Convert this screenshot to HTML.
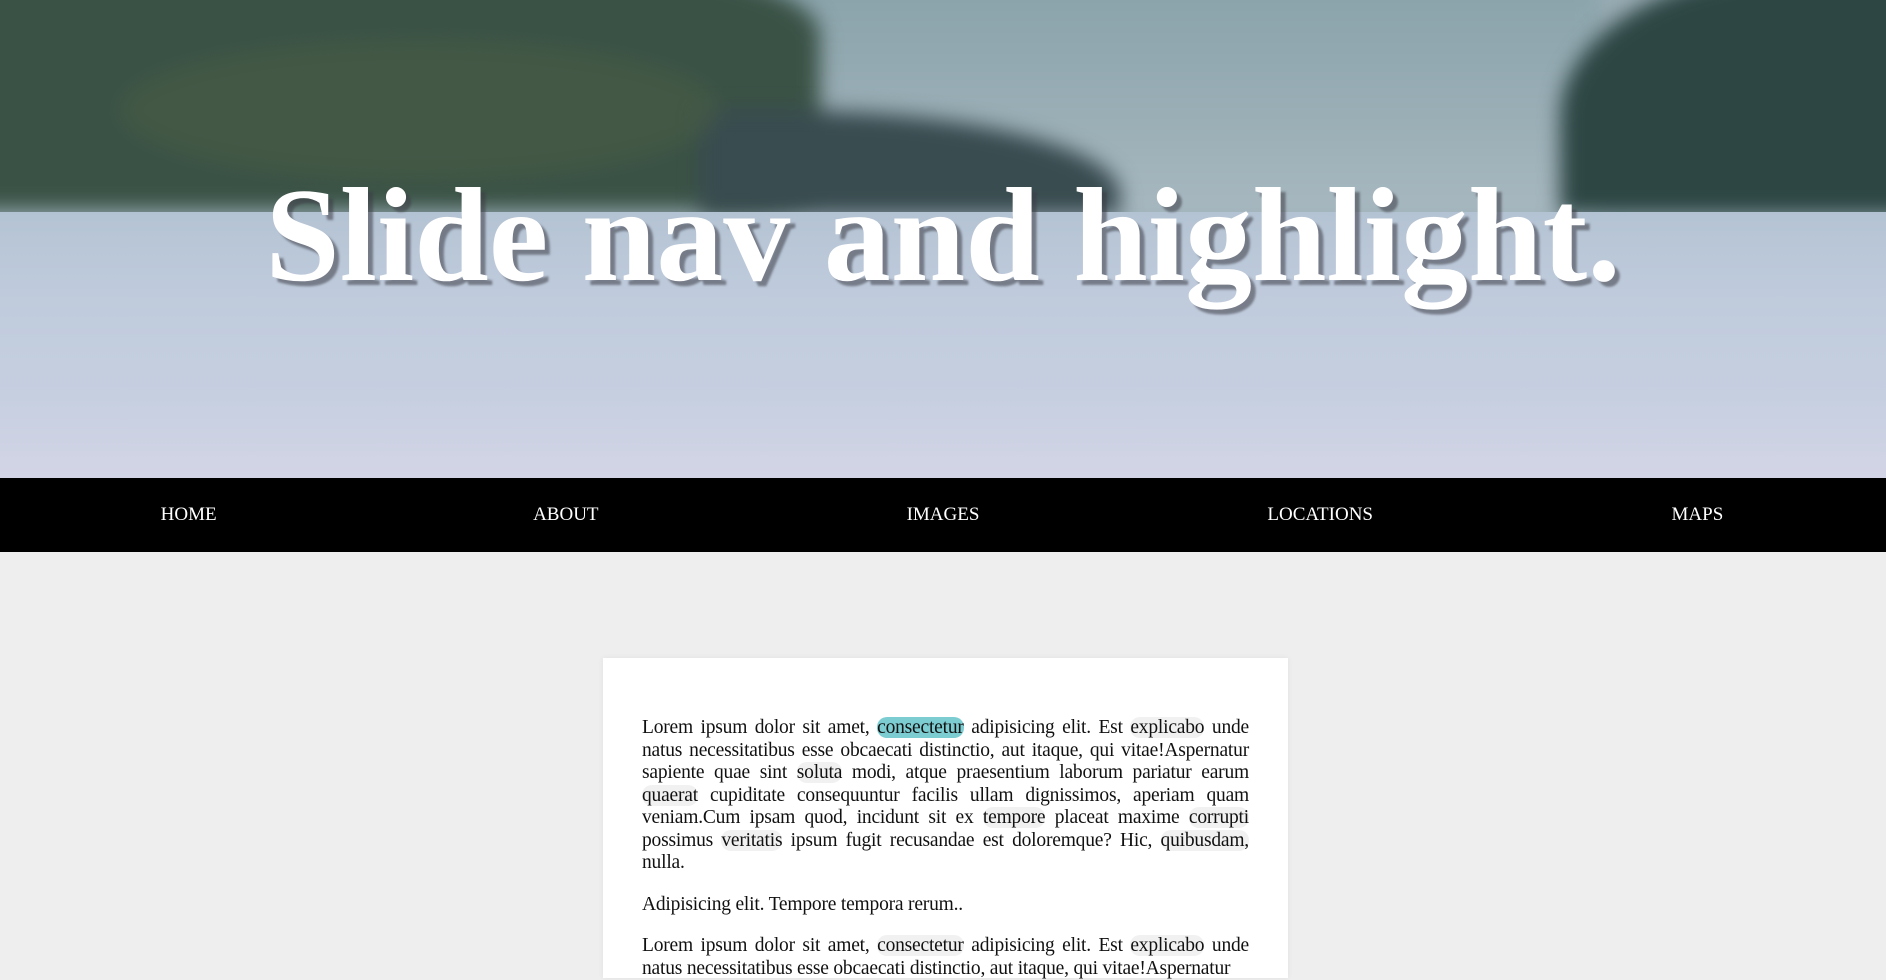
<!DOCTYPE html>
<html><head><meta charset="utf-8"><style>
*{margin:0;padding:0;box-sizing:border-box}
body{width:1886px;height:965px;overflow:hidden;background:#eeeeee;font-family:"Liberation Serif",serif}
.hero{position:relative;height:478px;overflow:hidden;background:#9aadb5}
.b{position:absolute;filter:blur(10px)}
.water{position:absolute;left:0;right:0;top:212px;bottom:0;background:linear-gradient(180deg,#b4c3d3 0%,#bfcbdc 30%,#c6cfe0 70%,#d3d5e6 100%)}
.hero h1{position:absolute;left:0;right:0;top:158px;text-align:center;font-size:134px;font-weight:bold;color:#fff;text-shadow:5px 5px 2px rgba(60,60,70,.55);white-space:nowrap}
nav{height:74px;background:#000;display:flex}
nav a{flex:1;text-align:center;color:#fff;font-size:19px;line-height:74px;text-decoration:none}
.card{position:absolute;left:603px;top:658px;width:685px;height:320px;background:#fff;box-shadow:0 0 6px rgba(0,0,0,.06);padding:59px 39px 0 39px}
.card p{font-size:19.5px;line-height:22.5px;text-align:justify;margin-bottom:19px;color:#111;letter-spacing:-0.2px}
.h{background:#f1f1f1;border-radius:10px}
.t{background:#7ccdd2;border-radius:10px}
</style></head><body>
<div class="hero">
<div class="b" style="left:700px;top:-40px;width:900px;height:260px;background:linear-gradient(180deg,#86a0a8,#a8b8c0);"></div>
<div class="b" style="left:-40px;top:-40px;width:860px;height:250px;background:#3a5246;border-radius:0 30% 10% 0"></div>
<div class="b" style="left:700px;top:110px;width:420px;height:105px;background:#394c50;border-radius:0 80% 0 0"></div>
<div class="b" style="left:120px;top:40px;width:600px;height:140px;background:#4c5f45;opacity:.5;border-radius:50%"></div>
<div class="b" style="left:1560px;top:-30px;width:400px;height:245px;background:#2d4644;border-radius:60% 0 0 0"></div>
<div class="water"></div>
<h1>Slide nav and highlight.</h1>
</div>
<nav><a>HOME</a><a>ABOUT</a><a>IMAGES</a><a>LOCATIONS</a><a>MAPS</a></nav>
<div class="card">
<p>Lorem ipsum dolor sit amet, <span class="t">consectetur</span> adipisicing elit. Est <span class="h">explicabo</span> unde natus necessitatibus esse obcaecati distinctio, aut itaque, qui vitae!Aspernatur sapiente quae sint <span class="h">soluta</span> modi, atque praesentium laborum pariatur earum <span class="h">quaerat</span> cupiditate consequuntur facilis ullam dignissimos, aperiam quam veniam.Cum ipsam quod, incidunt sit ex <span class="h">tempore</span> placeat maxime <span class="h">corrupti</span> possimus <span class="h">veritatis</span> ipsum fugit recusandae est doloremque? Hic, <span class="h">quibusdam,</span> nulla.</p>
<p>Adipisicing elit. Tempore tempora rerum..</p>
<p>Lorem ipsum dolor sit amet, <span class="h">consectetur</span> adipisicing elit. Est <span class="h">explicabo</span> unde natus necessitatibus esse obcaecati distinctio, aut itaque, qui vitae!Aspernatur</p>
</div>
</body></html>
